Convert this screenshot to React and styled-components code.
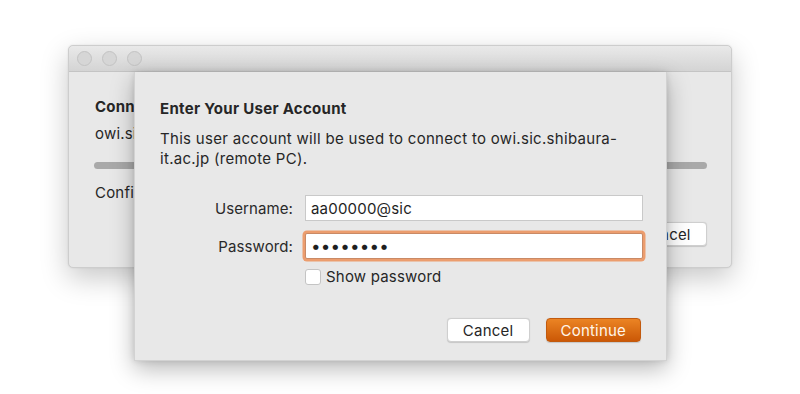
import React, { useState } from "react";
import styled, { createGlobalStyle } from "styled-components";

const GlobalStyle = createGlobalStyle`
  html, body {
    margin: 0;
    padding: 0;
    background: #ffffff;
  }
  body {
    font-family: Inter, "Noto Sans", "Liberation Sans", sans-serif;
    color: #262626;
    -webkit-font-smoothing: antialiased;
  }
`;

const App = () => {
  const [user, setUser] = useState("aa00000@sic");
  const [password, setPassword] = useState("abcdefgh");
  const [show, setShow] = useState(false);

  return (
    <>
      <GlobalStyle />
      <Stage>
        <Window>
          <TitleBar>
            <Light />
            <Light />
            <Light />
          </TitleBar>
          <WindowBody>
            <BackTitle>Connecting to owi.sic.shibaura-it.ac.jp</BackTitle>
            <BackText>owi.sic.shibaura-it.ac.jp</BackText>
            <Progress />
            <BackText gap="15px">Confirming the user account…</BackText>
            <BackFooter>
              <Button>Cancel</Button>
            </BackFooter>
          </WindowBody>

          {/* sheet lies over the window body */}
          <Sheet>
            <SheetTitle>Enter Your User Account</SheetTitle>
            <SheetText>
              This user account will be used to connect to
              owi.sic.shibaura-it.ac.jp (remote PC).
            </SheetText>
            <Form onSubmit={(e) => e.preventDefault()}>
              <Label>Username:</Label>
              <Field
                type="text"
                value={user}
                onChange={(e) => setUser(e.target.value)}
              />
              <Label>Password:</Label>
              <Field
                focused
                type={show ? "text" : "password"}
                value={password}
                onChange={(e) => setPassword(e.target.value)}
              />
              <span />
              <CheckRow>
                <Check
                  type="checkbox"
                  checked={show}
                  onChange={(e) => setShow(e.target.checked)}
                />
                Show password
              </CheckRow>
            </Form>
            <Footer>
              <Button>Cancel</Button>
              <Button primary>Continue</Button>
            </Footer>
          </Sheet>
        </Window>
      </Stage>
    </>
  );
};

export default App;

const Stage = styled.div`
  width: 800px;
  height: 394px;
  box-sizing: border-box;
  padding: 45px 68px 0 68px;
`;

const Window = styled.div`
  position: relative;
  width: 664px;
  height: 223px;
  box-sizing: border-box;
  border: 1px solid #cdcdcd;
  border-radius: 5px;
  background: #e8e8e8;
  box-shadow: 0 10px 28px rgba(0, 0, 0, 0.22), 0 0 2px rgba(0, 0, 0, 0.1);
  display: flex;
  flex-direction: column;
`;

const TitleBar = styled.div`
  height: 25px;
  flex-shrink: 0;
  display: flex;
  align-items: center;
  gap: 10px;
  padding-left: 8px;
  border-bottom: 1px solid #c4c4c4;
  border-radius: 5px 5px 0 0;
  background: linear-gradient(#e9e9e9, #d4d4d4);
`;

const Light = styled.span`
  width: 13px;
  height: 13px;
  border-radius: 50%;
  background: #d6d6d6;
  border: 1px solid #c3c3c3;
`;

const WindowBody = styled.div`
  flex: 1;
  display: flex;
  flex-direction: column;
  padding: 26px 24px 0 26px;
`;

const BackTitle = styled.div`
  font-size: 15px;
  font-weight: 700;
  line-height: 18px;
  letter-spacing: 0.2px;
  white-space: nowrap;
`;

const BackText = styled.div`
  font-size: 15px;
  line-height: 18px;
  letter-spacing: 0.2px;
  margin-top: ${(p) => p.gap || "9px"};
  white-space: nowrap;
`;

const Progress = styled.div`
  height: 7px;
  border-radius: 4px;
  background: #a9a9a9;
  margin: 19px 0 0 -1px;
`;

const BackFooter = styled.div`
  display: flex;
  justify-content: flex-end;
  margin-top: 20px;
`;

const Sheet = styled.div`
  position: absolute;
  left: 65px;
  top: 26px;
  width: 533px;
  height: 289px;
  box-sizing: border-box;
  padding: 28px 25px 0 25px;
  background: #e8e8e8;
  border: 1px solid #d2d2d2;
  border-top: none;
  box-shadow: 0 8px 22px rgba(0, 0, 0, 0.28), 0 0 6px rgba(0, 0, 0, 0.12);
  display: flex;
  flex-direction: column;
`;

const SheetTitle = styled.div`
  font-size: 15px;
  font-weight: 700;
  line-height: 18px;
  letter-spacing: 0.3px;
`;

const SheetText = styled.p`
  margin: 11px 0 0 0;
  font-size: 15px;
  line-height: 20px;
  letter-spacing: 0.3px;
  width: 483px;
`;

const Form = styled.form`
  display: grid;
  grid-template-columns: 133px 338px;
  column-gap: 12px;
  row-gap: 12px;
  align-items: center;
  margin-top: 26px;
`;

const Label = styled.label`
  font-size: 15px;
  letter-spacing: 0.1px;
  text-align: right;
  color: #2a2a2a;
`;

const Field = styled.input`
  height: 26px;
  box-sizing: border-box;
  border: 1px solid ${(p) => (p.focused ? "#c98a66" : "#c9c9c9")};
  background: #ffffff;
  padding: 0 5px;
  font-family: inherit;
  font-size: ${(p) => (p.focused ? "17px" : "15px")};
  color: #1e1e1e;
  letter-spacing: 0.2px;
  box-shadow: ${(p) => (p.focused ? "0 0 0 2.5px #ec9d6e" : "none")};
  border-radius: ${(p) => (p.focused ? "2px" : "0")};
  outline: none;
`;

const CheckRow = styled.label`
  display: flex;
  align-items: center;
  gap: 5px;
  font-size: 15px;
  letter-spacing: 0.2px;
  margin-top: -4px;
`;

const Check = styled.input`
  appearance: none;
  margin: 0;
  width: 16px;
  height: 16px;
  box-sizing: border-box;
  border: 1px solid #c4c4c4;
  border-radius: 3px;
  background: #ffffff;
`;

const Footer = styled.div`
  margin-top: auto;
  margin-bottom: 18px;
  display: flex;
  justify-content: flex-end;
  gap: 16px;
`;

const Button = styled.button`
  height: 24px;
  min-width: ${(p) => (p.primary ? "95px" : "83px")};
  box-sizing: border-box;
  padding: 0 14px;
  font-family: inherit;
  font-size: 15px;
  letter-spacing: 0.2px;
  border-radius: 4px;
  border: 1px solid ${(p) => (p.primary ? "#c25a0e" : "#cfcfcf")};
  color: ${(p) => (p.primary ? "#fff5ea" : "#262626")};
  background: ${(p) =>
    p.primary ? "linear-gradient(#eb8424, #cb5806)" : "#ffffff"};
  box-shadow: 0 0.5px 1px rgba(0, 0, 0, 0.15);
`;
